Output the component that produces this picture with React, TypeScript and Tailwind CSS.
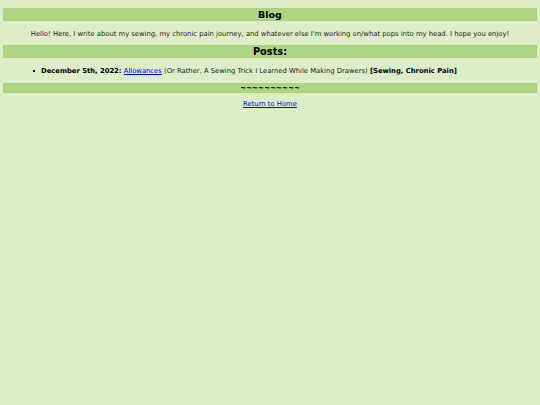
import React from 'react';

const Bar: React.FC<{ className?: string; children: React.ReactNode }> = ({ className = '', children }) => (
  <div className={`mx-[3px] bg-[#aed581] border border-[#a8d27c] text-center font-bold text-black ${className}`}>
    {children}
  </div>
);

const App: React.FC = () => {
  return (
    <div
      className="min-h-[405px] w-full bg-[#dcedc8] pt-[8px] text-[6.8px] text-[#222]"
      style={{ fontFamily: '"DejaVu Sans", Verdana, sans-serif' }}
    >
      {/* Titulo */}
      <Bar className="h-[13px] text-[9.5px] leading-[11px]">Blog</Bar>

      <p className="mt-[8px] text-center leading-[10px]">
        Hello! Here, I write about my sewing, my chronic pain journey, and whatever else I'm working on/what pops into my head. I hope you enjoy!
      </p>

      <Bar className="mt-[6px] h-[13px] text-[9.8px] leading-[11px]">Posts:</Bar>

      <ul className="mt-[8px] list-none leading-[10px]">
        <li className="flex items-center pl-[33px]">
          <span className="mr-[6px] inline-block h-[2px] w-[2px] bg-black" />
          <span>
            <b className="text-black">December 5th, 2022:</b>{' '}
            <a href="#" className="text-[#0000ee] underline">Allowances</a>{' '}
            (Or Rather, A Sewing Trick I Learned While Making Drawers){' '}
            <b className="text-black">[Sewing, Chronic Pain]</b>
          </span>
        </li>
      </ul>

      <Bar className="mt-[7px] h-[10px] text-[7.2px] leading-[8px]">~~~~~~~~~~</Bar>

      <div className="mt-[6px] text-center leading-[10px]">
        <a href="#" className="text-[#0000ee] underline">Return to Home</a>
      </div>
    </div>
  );
};

export default App;
